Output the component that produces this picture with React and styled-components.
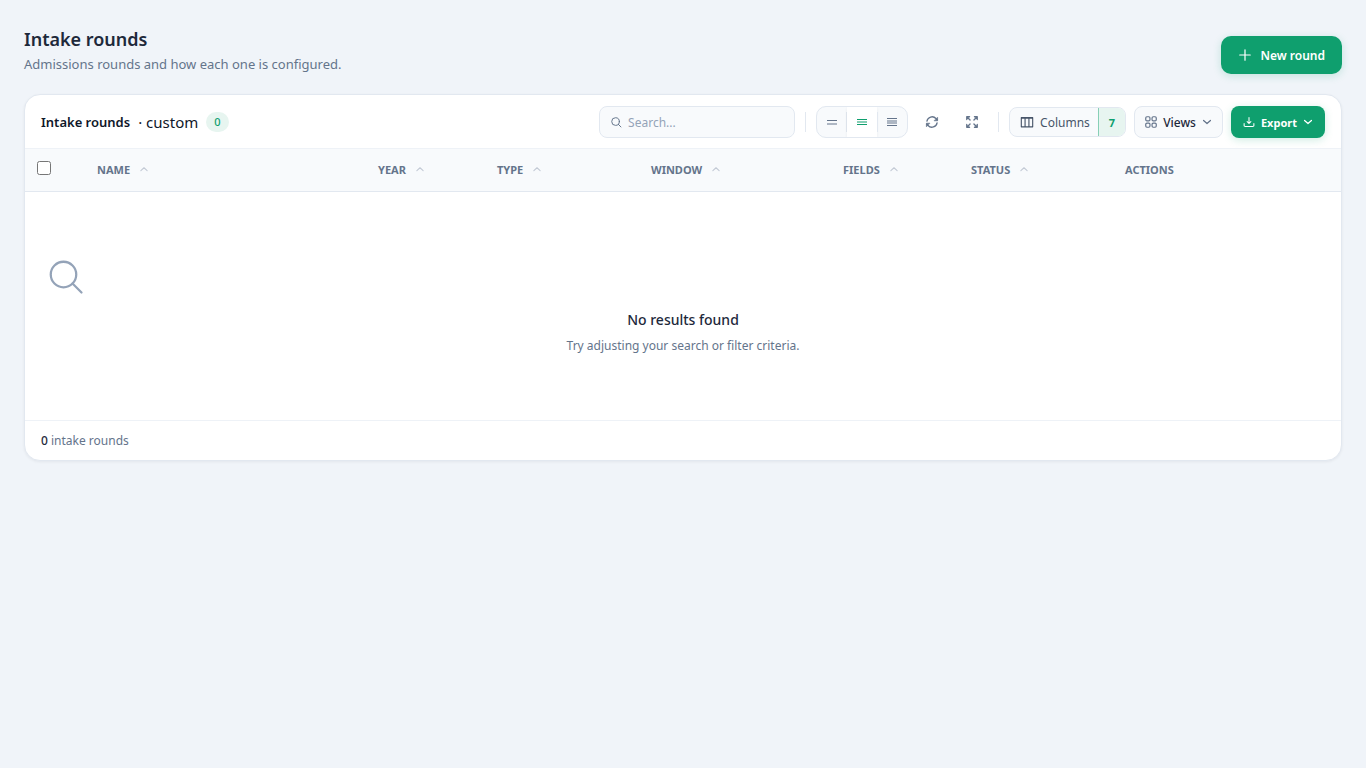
import React, { Fragment, useState } from 'react';
import styled, { createGlobalStyle } from 'styled-components';

const GlobalStyle = createGlobalStyle`
  * {
    box-sizing: border-box;
  }
  body {
    margin: 0;
    background: #f0f4f9;
    color: #1e293b;
    font-family: 'Segoe UI', 'Noto Sans', sans-serif;
    font-size: 12px;
  }
  button, input {
    font-family: inherit;
  }
  svg {
    display: block;
    flex: none;
  }
`;

const Page = styled.main`
  padding: 24px;
`;

const PageHeader = styled.header`
  display: flex;
  justify-content: space-between;
  align-items: flex-end;
  margin-bottom: 20px;
`;

const PageTitle = styled.h1`
  margin: 0;
  font-size: 18px;
  line-height: 30px;
  font-weight: 600;
`;

const PageText = styled.p`
  margin: 0;
  font-size: 13px;
  line-height: 20px;
  color: #64748b;
`;

const PrimaryButton = styled.button`
  display: flex;
  align-items: center;
  justify-content: center;
  gap: ${props => (props.$large ? '8px' : '6px')};
  height: ${props => (props.$large ? '38px' : '32px')};
  padding: ${props => (props.$large ? '0 17px' : '0 12px')};
  border: none;
  border-radius: ${props => (props.$large ? '10px' : '8px')};
  background: #0f9f6e;
  color: #fff;
  font-size: ${props => (props.$large ? '12px' : '11px')};
  font-weight: ${props => (props.$large ? '600' : '700')};
  box-shadow: 0 2px 8px rgba(15, 159, 110, 0.2);
  cursor: pointer;
`;

const Card = styled.section`
  background: #fff;
  border: 1px solid #e2e8f0;
  border-radius: 16px;
  box-shadow: 0 1px 3px rgba(15, 23, 42, 0.06);
  overflow: hidden;
`;

const Toolbar = styled.div`
  display: flex;
  align-items: center;
  justify-content: space-between;
  padding: 11px 16px 10px;
`;

const Heading = styled.div`
  display: flex;
  align-items: center;
  gap: 8px;
  font-size: 15px;
  color: #0f172a;
`;

const CardTitle = styled.h2`
  margin: 0;
  font-size: 13px;
  font-weight: 600;
`;

const Count = styled.span`
  padding: 0 8px;
  border-radius: 10px;
  background: #e7f5f0;
  color: #0f9f6e;
  font-size: 11px;
  line-height: 20px;
  font-weight: 500;
`;

const Tools = styled.div`
  display: flex;
  align-items: center;
  gap: 8px;
`;

const SearchBox = styled.label`
  display: flex;
  align-items: center;
  gap: 6px;
  width: 196px;
  height: 32px;
  padding: 0 10px;
  border: 1px solid #e2e8f0;
  border-radius: 8px;
  background: #f8fafc;
  color: #64748b;
`;

const SearchInput = styled.input`
  flex: 1;
  min-width: 0;
  padding: 0;
  border: none;
  outline: none;
  background: transparent;
  color: #1e293b;
  font-size: 12px;
  &::placeholder {
    color: #94a3b8;
  }
`;

const Divider = styled.span`
  width: 1px;
  height: 20px;
  margin: 0 2px;
  background: #e2e8f0;
`;

const Density = styled.div`
  display: flex;
  align-items: center;
  width: 92px;
  height: 32px;
  border: 1px solid #e2e8f0;
  border-radius: 10px;
  background: #f8fafc;
  overflow: hidden;
`;

const DensityDivider = styled(Divider)`
  margin: 0;
`;

const DensityButton = styled.button`
  display: flex;
  align-items: center;
  justify-content: center;
  flex: 1;
  height: 100%;
  padding: 0;
  border: none;
  background: ${props => (props.$active ? '#fff' : 'transparent')};
  color: ${props => (props.$active ? '#0f9f6e' : '#64748b')};
  box-shadow: ${props => (props.$active ? '0 1px 3px rgba(15, 23, 42, 0.06)' : 'none')};
  cursor: pointer;
`;

const IconButton = styled.button`
  display: flex;
  align-items: center;
  justify-content: center;
  width: 32px;
  height: 32px;
  padding: 0;
  border: none;
  background: transparent;
  color: #64748b;
  cursor: pointer;
`;

const ColumnsButton = styled.button`
  display: flex;
  align-items: stretch;
  height: 30px;
  padding: 0;
  border: 1px solid #e2e8f0;
  border-radius: 8px;
  background: #f8fafc;
  color: #475569;
  font-size: 12px;
  overflow: hidden;
  cursor: pointer;
`;

const ColumnsLabel = styled.span`
  display: flex;
  align-items: center;
  gap: 6px;
  padding: 0 8px 0 10px;
`;

const ColumnsCount = styled.span`
  display: flex;
  align-items: center;
  padding: 0 10px;
  border-left: 1px solid #87cfb6;
  background: #e7f5f0;
  color: #0f9f6e;
  font-size: 11px;
  font-weight: 700;
`;

const ViewsButton = styled.button`
  display: flex;
  align-items: center;
  gap: 6px;
  height: 32px;
  padding: 0 10px;
  border: 1px solid #e2e8f0;
  border-radius: 8px;
  background: #f8fafc;
  color: #1e293b;
  font-size: 12px;
  font-weight: 500;
  cursor: pointer;
  svg {
    color: #64748b;
  }
`;

const Table = styled.table`
  width: 100%;
  table-layout: fixed;
  border-collapse: separate;
  border-spacing: 0;
`;

const HeadCell = styled.th`
  height: 44px;
  padding: 0 16px 2px;
  border-top: 1px solid #eef2f7;
  border-bottom: 1px solid #e2e8f0;
  background: #f8fafc;
  color: #64748b;
  font-size: 11px;
  font-weight: 700;
  text-align: left;
  text-transform: uppercase;
`;

const CheckCell = styled(HeadCell)`
  padding: 0 12px 4px;
`;

const Check = styled.input`
  display: block;
  width: 14px;
  height: 14px;
  margin: 0;
`;

const SortButton = styled.button`
  display: flex;
  align-items: center;
  gap: 9px;
  padding: 0;
  border: none;
  background: none;
  color: inherit;
  font-size: inherit;
  font-weight: inherit;
  text-transform: inherit;
  cursor: pointer;
  svg {
    color: #c3cad5;
  }
`;

const EmptyCell = styled.td`
  padding: 64px 20px;
  text-align: center;
  svg {
    color: #94a3b8;
    margin-bottom: 12px;
  }
`;

const EmptyTitle = styled.p`
  margin: 0 0 4px;
  font-size: 14px;
  line-height: 24px;
  font-weight: 500;
`;

const EmptyText = styled.p`
  margin: 0;
  font-size: 12px;
  line-height: 20px;
  color: #64748b;
`;

const Footer = styled.footer`
  padding: 10px 16px 9px;
  border-top: 1px solid #eef2f7;
  line-height: 20px;
  color: #64748b;
  strong {
    color: #1e293b;
    font-weight: 500;
  }
`;

const Icon = ({ size = 14, stroke = 1, children, ...rest }) => (
  <svg
    width={size}
    height={size}
    viewBox="0 0 16 16"
    fill="none"
    stroke="currentColor"
    strokeWidth={stroke}
    strokeLinecap="round"
    strokeLinejoin="round"
    aria-hidden="true"
    {...rest}
  >
    {children}
  </svg>
);

const SearchIcon = props => (
  <Icon {...props}>
    <circle cx="7.4" cy="7.4" r="5.1" />
    <path d="M11 11 14.6 14.6" />
  </Icon>
);

const ChevronIcon = ({ up }) => (
  <Icon size={10} stroke={up ? 1.8 : 2}>
    <path d={up ? 'M3 10.5 8 6l5 4.5' : 'M2.5 5.5 8 10.5l5.5-5'} />
  </Icon>
);

const densities = [
  { name: 'Comfortable', path: 'M3 6.5h10M3 10h10' },
  { name: 'Normal', path: 'M3 5.5h10M3 8h10M3 10.5h10' },
  { name: 'Compact', path: 'M3 4.5h10M3 7h10M3 9h10M3 11.5h10' }
];

const columns = [
  { name: 'Name', width: 281 },
  { name: 'Year', width: 119 },
  { name: 'Type', width: 154 },
  { name: 'Window', width: 192 },
  { name: 'Fields', width: 128 },
  { name: 'Status', width: 154 }
];

const App = () => {
  const [density, setDensity] = useState('Normal');
  const [search, setSearch] = useState('');

  return (
    <Page>
      <GlobalStyle />
      <PageHeader>
        <div>
          <PageTitle>Intake rounds</PageTitle>
          <PageText>Admissions rounds and how each one is configured.</PageText>
        </div>
        <PrimaryButton type="button" $large>
          <Icon stroke={1.4}>
            <path d="M8 2v12M2 8h12" />
          </Icon>
          New round
        </PrimaryButton>
      </PageHeader>
      <Card>
        <Toolbar>
          <Heading>
            <CardTitle>Intake rounds</CardTitle>
            <span>· custom</span>
            <Count>0</Count>
          </Heading>
          <Tools>
            <SearchBox>
              <SearchIcon size={12} stroke={1.3} />
              <SearchInput
                type="text"
                aria-label="Search"
                placeholder="Search..."
                value={search}
                onChange={event => setSearch(event.target.value)}
              />
            </SearchBox>
            <Divider />
            <Density role="group" aria-label="Row density">
              {densities.map(({ name, path }, index) => (
                <Fragment key={name}>
                  {index > 0 && <DensityDivider />}
                  <DensityButton
                    type="button"
                    aria-label={name}
                    $active={density === name}
                    onClick={() => setDensity(name)}
                  >
                    <Icon size={16}>
                      <path d={path} strokeLinecap="butt" />
                    </Icon>
                  </DensityButton>
                </Fragment>
              ))}
            </Density>
            <IconButton type="button" aria-label="Refresh">
              <Icon stroke={1.5}>
                <path d="M2.2 7A6 6 0 0 1 12.5 4L14 5.6M13.8 9A6 6 0 0 1 3.5 12L2 10.4" />
                <path d="M14.4 3v3.6h-3.6zM1.6 13V9.4h3.6z" fill="currentColor" strokeWidth="0.8" />
              </Icon>
            </IconButton>
            <IconButton type="button" aria-label="Full screen">
              <Icon stroke={1.5}>
                <path d="M2 5.2V2h3.2M2 2l3.8 3.8M10.8 2H14v3.2M14 2l-3.8 3.8M2 10.8V14h3.2M2 14l3.8-3.8M10.8 14H14v-3.2M14 14l-3.8-3.8" />
              </Icon>
            </IconButton>
            <Divider />
            <ColumnsButton type="button">
              <ColumnsLabel>
                <Icon stroke={1.3}>
                  <path d="M1.5 3h13v10.5h-13zM5.8 3v10.5M10.2 3v10.5M1.5 3.5h13" />
                </Icon>
                Columns
              </ColumnsLabel>
              <ColumnsCount>7</ColumnsCount>
            </ColumnsButton>
            <ViewsButton type="button">
              <Icon size={12} stroke={1.6}>
                <rect x="1" y="1" width="5.6" height="5.6" rx="1.6" />
                <rect x="9.4" y="1" width="5.6" height="5.6" rx="1.6" />
                <rect x="1" y="9.4" width="5.6" height="5.6" rx="1.6" />
                <rect x="9.4" y="9.4" width="5.6" height="5.6" rx="1.6" />
              </Icon>
              Views
              <ChevronIcon />
            </ViewsButton>
            <PrimaryButton type="button">
              <Icon size={12} stroke={1.4}>
                <path d="M8 2v8M5.5 7.5 8 10l2.5-2.5M1.5 10v2.5a1.5 1.5 0 0 0 1.5 1.5h10a1.5 1.5 0 0 0 1.5-1.5V10" />
              </Icon>
              Export
              <ChevronIcon />
            </PrimaryButton>
          </Tools>
        </Toolbar>
        <Table>
          <colgroup>
            <col width="56" />
            {columns.map(column => (
              <col key={column.name} width={column.width} />
            ))}
            <col width="232" />
          </colgroup>
          <thead>
            <tr>
              <CheckCell>
                <Check type="checkbox" aria-label="Select all rounds" />
              </CheckCell>
              {columns.map(column => (
                <HeadCell key={column.name} scope="col">
                  <SortButton type="button">
                    {column.name}
                    <ChevronIcon up />
                  </SortButton>
                </HeadCell>
              ))}
              <HeadCell scope="col">Actions</HeadCell>
            </tr>
          </thead>
          <tbody>
            <tr>
              <EmptyCell colSpan={8}>
                <SearchIcon size={40} stroke={0.9} />
                <EmptyTitle>No results found</EmptyTitle>
                <EmptyText>Try adjusting your search or filter criteria.</EmptyText>
              </EmptyCell>
            </tr>
          </tbody>
        </Table>
        <Footer>
          <strong>0</strong> intake rounds
        </Footer>
      </Card>
    </Page>
  );
};

export default App;
